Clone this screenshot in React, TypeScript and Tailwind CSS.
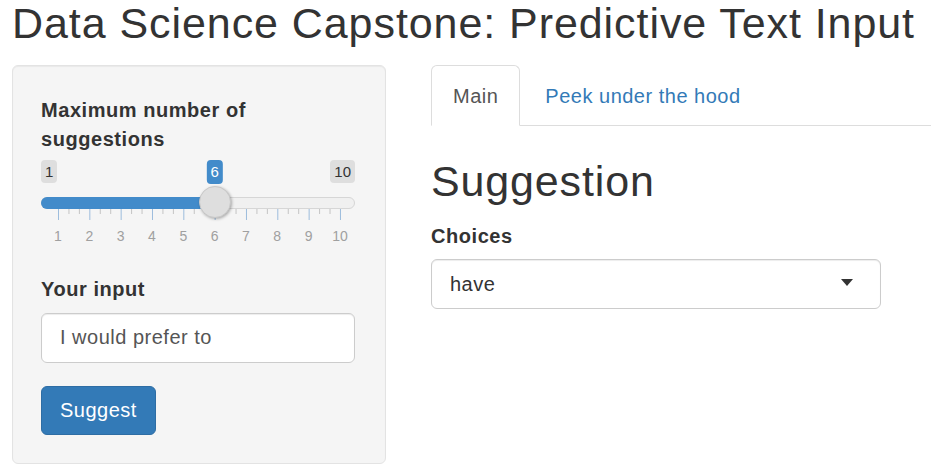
import { useState } from 'react'

// Shiny/Bootstrap 3 page rendered at ~143% zoom, so every size here is the
// Bootstrap default × 1.43 (14px body → 20px, h2 30px → 43px).
const TICKS = Array.from({ length: 10 }, (_, i) => i + 1)
const STEP = 31.33 // px between major ticks
const ORIGIN = 17 // first tick offset inside the slider

// Tick ruler under the track: a major line per value, two minor ones between
function Ruler() {
  const lines: { x: number; major: boolean }[] = []
  TICKS.forEach((n, i) => {
    const x = ORIGIN + i * STEP + 0.5
    lines.push({ x, major: true })
    if (n < 10) {
      lines.push({ x: x + STEP / 3, major: false })
      lines.push({ x: x + (2 * STEP) / 3, major: false })
    }
  })
  return (
    <svg width="314" height="11" className="block">
      {lines.map((l, i) => (
        <line
          key={i}
          x1={l.x}
          x2={l.x}
          y1={0}
          y2={l.major ? 11 : 5}
          stroke={l.major ? '#9dbddd' : '#c4c4c4'}
          strokeWidth={1}
        />
      ))}
    </svg>
  )
}

function RangeSlider({ value }: { value: number }) {
  const pos = ORIGIN + (value - 1) * STEP

  return (
    <div>
      <div className="relative flex justify-between mt-[2px] h-[24px] text-[15px]">
        <span className="h-[23px] px-[4px] leading-[23px] bg-[#dedede] rounded-[4px]">1</span>
        {/* current value floats above the handle */}
        <span
          className="absolute top-0 h-[24px] px-[4px] leading-[24px] text-white bg-[#428bca] rounded-[4px] -translate-x-1/2"
          style={{ left: pos }}
        >
          {value}
        </span>
        <span className="h-[23px] px-[4px] leading-[23px] bg-[#dedede] rounded-[4px]">10</span>
      </div>

      <div className="relative mt-[13px] h-[12px] rounded-full bg-[#f0f0f0] border border-[#d6d6d6]">
        <div className="-m-px h-[12px] rounded-l-full bg-[#428bca]" style={{ width: pos }} />
        <div
          className="absolute top-[-12px] w-[32px] h-[32px] rounded-full bg-[#dedede] border border-[#c8c8c8] shadow-[1px_1px_3px_rgba(0,0,0,0.3)] -translate-x-1/2"
          style={{ left: pos - 1 }}
        />
      </div>

      <Ruler />

      <div className="grid grid-cols-10 w-[314.6px] pl-[1.3px] mt-[9px] text-[14px] leading-[14px] text-[#a0a0a0] text-center">
        {TICKS.map(n => (
          <span key={n}>{n}</span>
        ))}
      </div>
    </div>
  )
}

const tabBase = 'h-[61px] px-[21px] pt-[16px] pb-[14px] text-[20px] leading-[28.6px] tracking-[0.5px] border rounded-t-[6px]'
const tabActive = 'text-[#555] bg-white border-[#ddd] border-b-transparent'
const tabIdle = 'text-[#337ab7] border-transparent'

export default function App() {
  const [tab, setTab] = useState<'main' | 'hood'>('main')
  const [input, setInput] = useState('I would prefer to')

  return (
    <div className="w-[931px] h-[471px] overflow-hidden bg-white text-[#333] font-['Liberation_Sans',Arial,sans-serif]">
      <h2 className="pl-[12px] text-[43px] leading-[47px] tracking-[0.93px] font-normal whitespace-nowrap">
        Data Science Capstone: Predictive Text Input
      </h2>

      <div className="flex mt-[18px]">
        {/* sidebar */}
        <div className="ml-[12px] w-[374px] h-[399px] shrink-0 bg-[#f5f5f5] border border-[#e3e3e3] rounded-[6px] shadow-[inset_0_1px_1px_rgba(0,0,0,0.05)] pl-[28px] pr-[30px] pt-[30px]">
          <label className="block text-[20px] leading-[28.6px] tracking-[0.55px] font-bold mb-[7px]">
            Maximum number of suggestions
          </label>
          <RangeSlider value={6} />

          <label className="block mt-[32px] text-[20px] leading-[28.6px] tracking-[0.55px] font-bold mb-[9px]">
            Your input
          </label>
          <input
            value={input}
            onChange={e => setInput(e.target.value)}
            className="block w-full h-[50px] px-[18px] text-[20px] tracking-[0.5px] text-[#555] bg-white border border-[#ccc] rounded-[6px] shadow-[inset_0_1px_1px_rgba(0,0,0,0.075)] outline-none"
          />
          <button className="mt-[23px] h-[49px] px-[18px] text-[20px] tracking-[0.5px] text-white bg-[#337ab7] border border-[#2e6da4] rounded-[6px]">
            Suggest
          </button>
        </div>

        {/* main panel */}
        <div className="ml-[45px] flex-1">
          <ul className="flex gap-[3px] h-[61px] border-b border-[#ddd]">
            <li className="-mb-px">
              <button onClick={() => setTab('main')} className={`${tabBase} ${tab === 'main' ? tabActive : tabIdle}`}>
                Main
              </button>
            </li>
            <li className="-mb-px">
              <button onClick={() => setTab('hood')} className={`${tabBase} ${tab === 'hood' ? tabActive : tabIdle}`}>
                Peek under the hood
              </button>
            </li>
          </ul>

          <h2 className="mt-[32px] text-[43px] leading-[47px] tracking-[0.85px] font-normal">Suggestion</h2>
          <label className="block mt-[17px] mb-[8px] text-[20px] leading-[28.6px] tracking-[0.55px] font-bold">
            Choices
          </label>
          <div className="flex items-center justify-between w-[450px] h-[50px] pl-[18px] pr-[27px] text-[20px] tracking-[0.5px] bg-white border border-[#ccc] rounded-[6px] shadow-[inset_0_1px_1px_rgba(0,0,0,0.075)]">
            <span>have</span>
            <span className="w-0 h-0 -mt-[2px] border-x-[6.5px] border-x-transparent border-t-[7px] border-t-[#333]" />
          </div>
        </div>
      </div>
    </div>
  )
}
